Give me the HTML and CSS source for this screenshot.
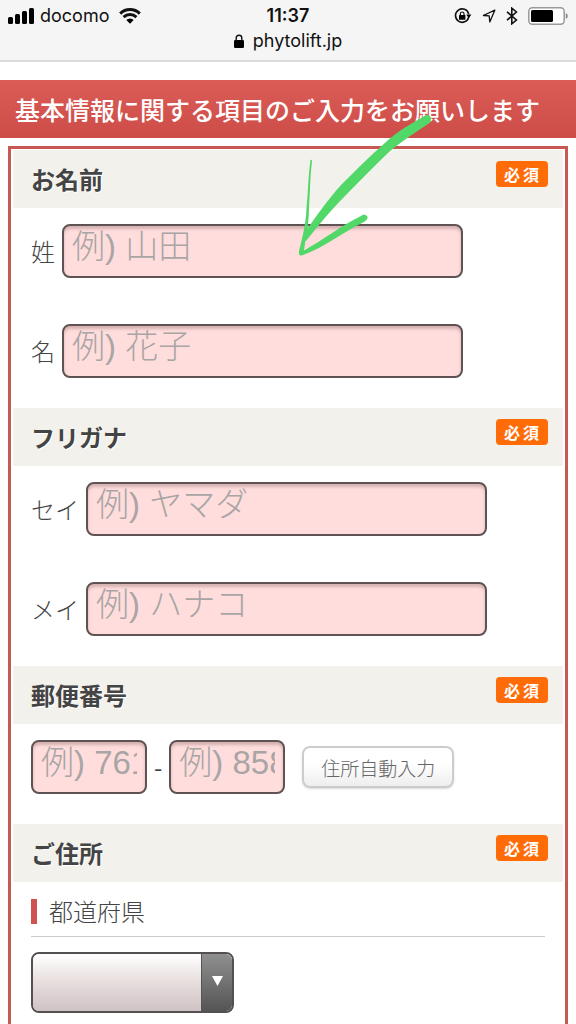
FILE: index.html
```html
<!DOCTYPE html>
<html lang="ja">
<head>
  <meta charset="UTF-8" />
  <meta name="viewport" content="width=device-width, initial-scale=1.0"/>
  <title>phytolift.jp</title>
  <link rel="stylesheet" href="styles.css">
</head>
<body>
  <header class="browser-bar">
    <div class="status">
      <div class="carrier">
        <svg class="signal" width="26" height="16" viewBox="0 0 26 16" aria-hidden="true">
          <rect x="0" y="9" width="5" height="7" rx="1.5"/>
          <rect x="7" y="6" width="5" height="10" rx="1.5"/>
          <rect x="14" y="3" width="5" height="13" rx="1.5"/>
          <rect x="21" y="0" width="5" height="16" rx="1.5"/>
        </svg>
        <span>docomo</span>
        <svg class="wifi" width="22" height="16" viewBox="0 0 22 16" aria-hidden="true">
          <path d="M1.2 5.6a14 14 0 0 1 19.6 0M4.6 9.2a9.2 9.2 0 0 1 12.8 0" fill="none" stroke="#111" stroke-width="3"/>
          <path d="M11 15.8 7.3 12a5.3 5.3 0 0 1 7.4 0z"/>
        </svg>
      </div>
      <time class="clock">11:37</time>
      <div class="indicators">
        <svg width="18" height="16" viewBox="0 0 18 16" aria-hidden="true">
          <path d="M14.7 9.2A6.7 6.7 0 1 1 14.7 6" fill="none" stroke="#111" stroke-width="1.6"/>
          <path d="M12.2 6.4h5.2l-2.6 3.8z"/>
          <rect x="5" y="7" width="6.4" height="4.8" rx=".6"/>
          <path d="M6.4 7.4V5.8a1.8 1.8 0 0 1 3.6 0v1.6" fill="none" stroke="#111" stroke-width="1.2"/>
        </svg>
        <svg width="14" height="14" viewBox="0 0 14 14" aria-hidden="true">
          <path d="M12.8 1.2 1.4 6.5l5.8.4.6 6z" fill="none" stroke="#111" stroke-width="1.3" stroke-linejoin="round"/>
        </svg>
        <svg width="12" height="18" viewBox="0 0 12 18" aria-hidden="true">
          <path d="M1 4.8 10.4 13 5.8 16.8V1.2L10.4 5 1 13.2" fill="none" stroke="#111" stroke-width="1.6"/>
        </svg>
        <svg class="battery" width="40" height="18" viewBox="0 0 40 18" aria-hidden="true">
          <rect x=".8" y=".8" width="35.4" height="16.4" rx="3.6" fill="#fff" stroke="#999" stroke-width="1.5"/>
          <rect x="3" y="3" width="22" height="12" rx="1.5" fill="#000"/>
          <path d="M37.8 6q2 .8 2 3t-2 3z" fill="#888"/>
        </svg>
      </div>
    </div>
    <div class="address">
      <svg width="10" height="14" viewBox="0 0 10 14" aria-hidden="true">
        <rect x="0" y="6" width="10" height="8" rx="1.2"/>
        <path d="M2.2 7V4a2.8 2.8 0 0 1 5.6 0v3" fill="none" stroke="#111" stroke-width="1.4"/>
      </svg>
      <span>phytolift.jp</span>
    </div>
  </header>

  <main class="page">
    <h1>基本情報に関する項目のご入力をお願いします</h1>

    <form class="entry-form">
      <h2 class="item-title">お名前<span class="required">必須</span></h2>
      <div class="item-body">
        <div class="field">
          <label for="sei">姓</label>
          <input type="text" id="sei" class="name-input" placeholder="例) 山田" />
        </div>
        <div class="field">
          <label for="mei">名</label>
          <input type="text" id="mei" class="name-input" placeholder="例) 花子" />
        </div>
      </div>

      <h2 class="item-title">フリガナ<span class="required">必須</span></h2>
      <div class="item-body">
        <div class="field">
          <label for="sei-kana">セイ</label>
          <input type="text" id="sei-kana" class="name-input" placeholder="例) ヤマダ" />
        </div>
        <div class="field">
          <label for="mei-kana">メイ</label>
          <input type="text" id="mei-kana" class="name-input" placeholder="例) ハナコ" />
        </div>
      </div>

      <h2 class="item-title" id="zip-title">郵便番号<span class="required">必須</span></h2>
      <div class="item-body">
        <div class="field">
          <input type="text" class="zip-input" placeholder="例) 761" aria-labelledby="zip-title" />
          <span>-</span>
          <input type="text" class="zip-input" placeholder="例) 8580" aria-labelledby="zip-title" />
          <button type="button" class="zip-button">住所自動入力</button>
        </div>
      </div>

      <h2 class="item-title">ご住所<span class="required">必須</span></h2>
      <div class="item-body">
        <label for="pref" class="sub-title">都道府県</label>
        <div class="select-box">
          <select id="pref">
            <option value=""></option>
            <option>東京都</option>
            <option>大阪府</option>
            <option>香川県</option>
          </select>
          <span class="select-arrow"><svg width="11" height="10" viewBox="0 0 11 10" aria-hidden="true"><path d="M0 0h11L5.500 10z" fill="#fff"/></svg></span>
        </div>
      </div>
    </form>

    <!-- hand-drawn arrow -->
    <svg class="arrow" width="140" height="146" viewBox="296 112 140 146" aria-hidden="true">
      <path d="M424.500 116C412 123 398 131 386 142C371 155 357 169 342 184C328 199 315 218 303 235Q302 241 306 241C316 229 328 213 344 197C359 182 374 166 390 151C402 141 416 132 428 124Q433 121 430 116Q427 114 424.500 116Z"/>
      <path d="M310.500 160C308 178 308 193 306.500 208C306 224 302 239 299 251Q298 257 303 255C325 247 343 232 364 222Q369 219 367 216Q364 213 361 216C342 225 323 240 304 250.500C306 236 309 223 309 208C310 192 310 177 312 161Q312 159 310.500 160Z"/>
    </svg>
  </main>
</body>
</html>
```
FILE: styles.css
```css
* {
  box-sizing: border-box;
}

body {
  display: flex;
  flex-direction: column;
  height: 100vh;
  margin: 0;
  overflow: hidden;
  background: #fff;
  color: #444;
  font-family: "Noto Sans CJK JP", sans-serif;
  font-size: 24px;
}

.browser-bar {
  height: 62px;
  padding: 4px 8px 0;
  background: #f6f5f5;
  border-bottom: 2px solid #dcdadc;
  color: #111;
  font-family: Inter, sans-serif;
  font-size: 18px;
  line-height: 24px;
}

.status {
  display: grid;
  grid-template-columns: 1fr auto 1fr;
  align-items: center;
}

.carrier,
.indicators {
  display: flex;
  align-items: center;
}

.carrier {
  gap: 6px;
}

.wifi {
  margin-left: 4px;
}

.clock {
  font-weight: 600;
}

.indicators {
  justify-content: flex-end;
  gap: 10px;
}

.address {
  display: flex;
  align-items: center;
  justify-content: center;
  gap: 9px;
  padding-top: 1px;
}

.page {
  position: relative;
  display: flex;
  flex: 1;
  flex-direction: column;
  min-height: 0;
  padding-top: 18px;
}

h1 {
  margin: 0 0 8px;
  padding: 0 15px;
  background: linear-gradient(#db5c56, #cd4c49);
  color: #fff;
  font-size: 25px;
  font-weight: 500;
  line-height: 58px;
  white-space: nowrap;
}

.entry-form {
  flex: 1;
  margin: 0 8px;
  padding: 1px 2px;
  border: 3px solid #c75852;
  border-bottom: none;
}

.item-title {
  display: flex;
  align-items: flex-start;
  justify-content: space-between;
  margin: 0;
  padding: 0 15px 0 18px;
  background: #f2f1ec;
  font-size: 24px;
  font-weight: 700;
  line-height: 58px;
  text-shadow: 1px 1px 0 #fff;
}

.required {
  margin-top: 11px;
  padding-left: 8px;
  width: 52px;
  background: #ff6b06;
  border-radius: 4px;
  color: #fff;
  font-size: 16px;
  letter-spacing: 3px;
  line-height: 26px;
  text-shadow: none;
}

.item-body {
  display: flex;
  flex-direction: column;
  gap: 46px;
  padding: 16px 18px 30px;
}

.field {
  display: flex;
  align-items: center;
  gap: 7px;
  line-height: 54px;
}

.field label,
.sub-title {
  font-weight: 300;
}

input {
  height: 54px;
  padding: 0 8px 8px;
  background: #ffdddd;
  border: 2px solid #5e5252;
  border-radius: 8px;
  box-shadow: inset 0 3px 3px rgba(90, 50, 50, 0.25);
  color: #444;
  font-family: "Liberation Sans", "Noto Sans CJK JP", sans-serif;
  font-size: 33px;
  font-weight: 300;
}

input::placeholder {
  color: #aaa5a5;
}

.name-input {
  width: 78%;
}

.zip-input {
  width: 116px;
}

.zip-button {
  height: 42px;
  margin-left: 10px;
  padding: 0 17px;
  background: linear-gradient(#fff 40%, #eee);
  border: 2px solid #ccc;
  border-radius: 8px;
  box-shadow: 0 1px 2px rgba(0, 0, 0, 0.15);
  color: #666;
  font-family: "Noto Sans CJK JP", sans-serif;
  font-size: 19px;
  font-weight: 300;
}

.sub-title {
  display: flex;
  align-items: center;
  gap: 12px;
  padding-bottom: 12px;
  border-bottom: 1px solid #ccc;
  line-height: 26px;
}

.sub-title::before {
  content: "";
  width: 6px;
  height: 25px;
  background: #d05250;
}

.sub-title + .select-box {
  margin-top: -31px;
}

.select-box {
  position: relative;
  display: flex;
  width: 203px;
  height: 61px;
  overflow: hidden;
  border: 2px solid #555050;
  border-radius: 8px;
}

select {
  flex: 1;
  padding: 0 40px 0 8px;
  appearance: none;
  background: linear-gradient(#fff, #e7dddd 50%, #cfc2c4);
  border: none;
  color: #444;
  font-size: 24px;
}

.select-arrow {
  position: absolute;
  top: 0;
  right: 0;
  bottom: 0;
  display: flex;
  align-items: center;
  justify-content: center;
  width: 31px;
  padding-bottom: 4px;
  background: linear-gradient(#8f8f8f, #555);
  border-left: 1px solid #555;
  pointer-events: none;
}

.arrow {
  position: absolute;
  top: 50px;
  left: 296px;
  fill: #52d769;
  pointer-events: none;
}
```
